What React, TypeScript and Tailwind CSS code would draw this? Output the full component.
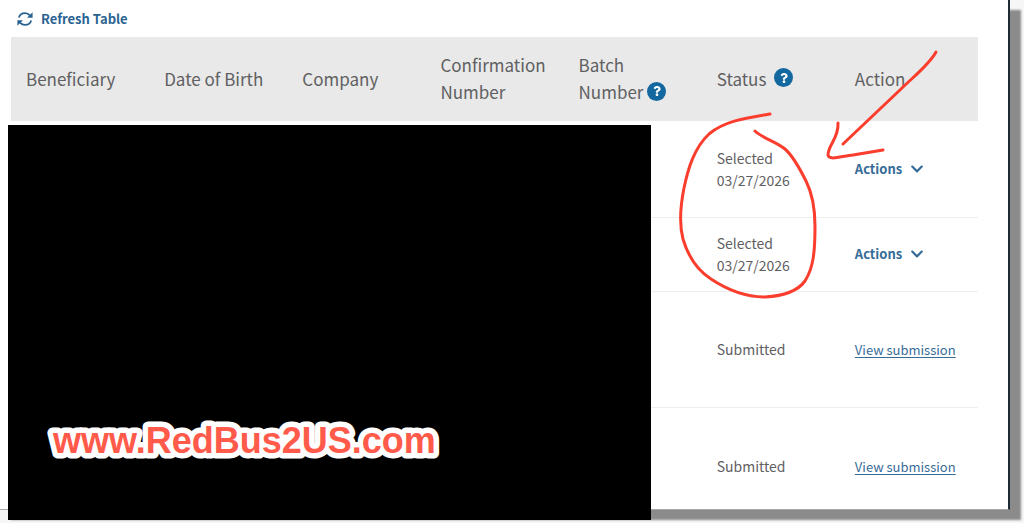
import React from 'react';
import { FaChevronDown, FaQuestion } from 'react-icons/fa';

interface Registration {
    id: number;
    status: string;
    selectedOn?: string;
    rowClass: string;
}

const columns = [
    { label: 'Beneficiary' },
    { label: 'Date of Birth' },
    { label: 'Company' },
    { label: 'Confirmation Number' },
    { label: 'Batch Number', help: true, helpClass: 'ml-1' },
    { label: 'Status', help: true, helpClass: 'ml-2' },
    { label: 'Action' },
];

const registrations: Registration[] = [
    { id: 1, status: 'Selected', selectedOn: '03/27/2026', rowClass: 'h-24' },
    { id: 2, status: 'Selected', selectedOn: '03/27/2026', rowClass: 'h-[74px]' },
    { id: 3, status: 'Submitted', rowClass: 'h-[116px]' },
    { id: 4, status: 'Submitted', rowClass: 'h-[118px]' },
];

const RefreshIcon: React.FC = () => (
    <svg className="size-4" viewBox="0 0 16 16" fill="none" stroke="currentColor" strokeWidth="1.8">
        <path d="M1.8 6.6C2.6 3.8 5 2.1 8 2.1c2 0 3.7.8 4.9 2.3" />
        <path d="M14.2 9.4c-.8 2.8-3.2 4.5-6.2 4.5-2 0-3.7-.8-4.9-2.3" />
        <path d="M15.6 1.2v5.6H10zM.4 14.8V9.2H6z" fill="currentColor" stroke="none" />
    </svg>
);

const HelpButton: React.FC<{ label: string; className?: string }> = ({ label, className }) => (
    <button
        type="button"
        aria-label={`Help for ${label}`}
        className={`inline-flex size-[19px] items-center justify-center rounded-full bg-[#1468a0] align-[3px] text-white ${className}`}
    >
        <FaQuestion className="size-2.5" />
    </button>
);

const RegistrationTable: React.FC = () => (
    <table className="w-full table-fixed border-collapse text-left text-[#5f6062]">
        <thead>
            <tr className="h-[84px] bg-[#e9e9e9]">
                {columns.map(({ label, help, helpClass }) => (
                    <th key={label} scope="col" className="pr-4 pb-0.5 pl-[15px] text-[17px] leading-[27px] font-normal">
                        {label}
                        {help && <HelpButton label={label} className={helpClass} />}
                    </th>
                ))}
            </tr>
        </thead>
        <tbody className="text-sm leading-[22px]">
            {registrations.map(({ id, status, selectedOn, rowClass }) => (
                <tr key={id} className={`border-b border-[#eeeeee] ${rowClass}`}>
                    <td colSpan={5} />
                    <td className="pl-[15px]">
                        {status}
                        {selectedOn && <div>{selectedOn}</div>}
                    </td>
                    <td className="pl-[15px] whitespace-nowrap text-[#376c98]">
                        {selectedOn ? (
                            <button type="button" className="flex items-center gap-2 text-[13px] font-bold">
                                Actions
                                <FaChevronDown className="size-3.5" />
                            </button>
                        ) : (
                            <a href="#submission" className="text-[13px] underline underline-offset-2">View submission</a>
                        )}
                    </td>
                </tr>
            ))}
        </tbody>
    </table>
);

const Watermark: React.FC = () => (
    <svg className="absolute top-[285px] left-8 h-16 w-[420px]" viewBox="0 0 420 64">
        <text
            x="13"
            y="43"
            className="fill-[#ff5a4a] stroke-white stroke-[11px] font-['Liberation_Sans',Arial,sans-serif] text-[36px] font-bold [paint-order:stroke] [stroke-linejoin:round]"
        >
            www.RedBus2US.com
        </text>
    </svg>
);

// hand drawn circle around the selected rows and the arrow pointing at them
const Annotations: React.FC = () => (
    <svg
        className="pointer-events-none absolute top-10 right-[30px] h-[270px] w-[308px]"
        viewBox="670 40 308 270"
        fill="none"
        stroke="#fa3d2d"
        strokeWidth="3"
        strokeLinecap="round"
        strokeLinejoin="round"
    >
        <path d="M770 114C746 118 724 121 709 134C694 148 688 169 684 188C680 208 679 224 683 239C688 256 697 270 711 279C726 289 745 297 765 297C782 296 797 292 805 281C814 267 815 249 815 226C815 208 812 193 806 181C799 167 792 155 785 149C777 142 762 138 755 131" />
        <path d="M936 52C929 65 913 77 901 89L843 144" />
        <path d="M838 123C839 138 828 145 828 155C829 161 842 156 853 155L883 150" />
    </svg>
);

const App: React.FC = () => {
    return (
        <div className="min-h-screen overflow-hidden bg-[#f6f6f6] pr-3.5 pb-[13px] font-['Noto_Sans_CJK_SC','Source_Sans_Pro',sans-serif]">
            <main className="relative h-[510px] border-r-2 border-b border-r-[#1d2b36] border-b-[#a8a8a8] bg-white shadow-[11px_10px_2px_#8b8b8b]">
                <div className="h-full overflow-hidden pr-[30px] pl-[11px]">
                    <div className="flex h-[37px] items-center pl-1.5">
                        <button type="button" className="flex items-center gap-2 text-[13px] font-bold text-[#2a6391]">
                            <RefreshIcon />
                            Refresh Table
                        </button>
                    </div>
                    <RegistrationTable />
                </div>

                <div className="absolute top-[125px] left-2 h-[395px] w-[643px] bg-black">
                    <Watermark />
                </div>
                <Annotations />
            </main>
        </div>
    );
};

export default App;
